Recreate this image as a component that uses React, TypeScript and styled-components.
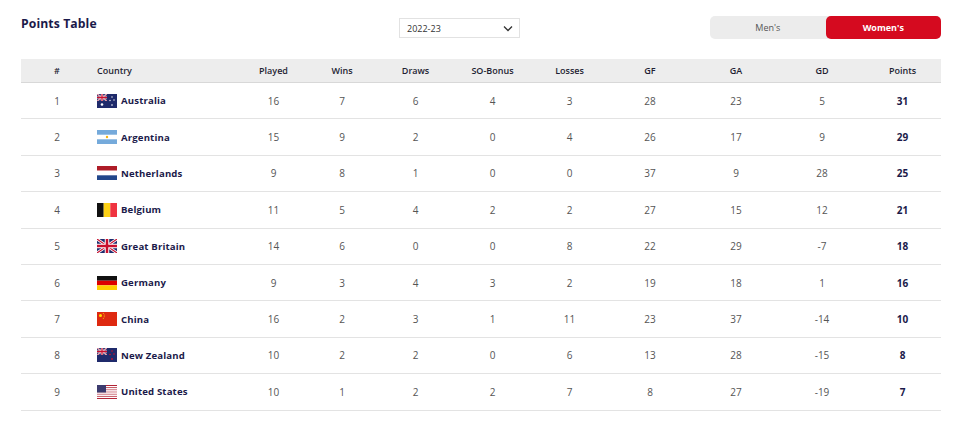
import * as React from 'react';
import styled, { createGlobalStyle } from 'styled-components';

const GlobalStyle = createGlobalStyle`
    html, body {
        margin: 0;
        padding: 0;
        background: #ffffff;
    }
    body {
        font-family: 'Open Sans', 'Liberation Sans', sans-serif;
        color: #1b1a4a;
    }
`;

const COLUMNS = '72px 147px 67px 70px 77px 77px 77px 84px 88px 84px 77px';

const Page = styled.div`
    width: 960px;
    padding: 12px 19px 0 21px;
    box-sizing: border-box;
`;

const TopBar = styled.div`
    display: grid;
    grid-template-columns: 378px 121px 1fr 231px;
    align-items: start;
    height: 47px;
`;

const Title = styled.h1`
    margin: 3px 0 0;
    font-size: 12.2px;
    font-weight: 700;
    color: #1b1a4a;
    letter-spacing: 0.1px;
`;

const SeasonSelect = styled.div`
    margin-top: 6px;
    height: 20px;
    border: 1px solid #e2e2e2;
    box-sizing: border-box;
    display: flex;
    align-items: center;
    justify-content: space-between;
    padding: 0 6px 0 7px;
    font-size: 9px;
    color: #333;
`;

const Toggle = styled.div`
    margin-top: 4px;
    display: grid;
    grid-template-columns: 1fr 1fr;
    height: 23px;
    background: #ececec;
    border-radius: 5px;
`;

const ToggleButton = styled.div<{ $active?: boolean }>`
    display: flex;
    align-items: center;
    justify-content: center;
    border-radius: 5px;
    font-size: 9px;
    font-weight: ${({ $active }) => ($active ? 700 : 400)};
    color: ${({ $active }) => ($active ? '#ffffff' : '#555')};
    background: ${({ $active }) => ($active ? '#d50a1f' : 'transparent')};
`;

const Table = styled.div`
    width: 920px;
`;

const HeaderRow = styled.div`
    display: grid;
    grid-template-columns: ${COLUMNS};
    height: 23px;
    background: #ededed;
    border-bottom: 1px solid #d8d8d8;
    align-items: center;
`;

const HeaderCell = styled.div<{ $left?: boolean }>`
    font-size: 9px;
    font-weight: 600;
    color: #1f1f33;
    text-align: ${({ $left }) => ($left ? 'left' : 'center')};
    padding-left: ${({ $left }) => ($left ? '4px' : '0')};
`;

const Row = styled.div`
    display: grid;
    grid-template-columns: ${COLUMNS};
    height: 35.4px;
    border-bottom: 1px solid #e3e3e3;
    align-items: center;
    box-sizing: content-box;
`;

const Cell = styled.div<{ $bold?: boolean }>`
    font-size: 10px;
    text-align: center;
    color: ${({ $bold }) => ($bold ? '#1b1a4a' : '#555')};
    font-weight: ${({ $bold }) => ($bold ? 700 : 400)};
`;

const CountryCell = styled.div`
    display: flex;
    align-items: center;
    gap: 4px;
    padding-left: 4px;
    font-size: 9.6px;
    font-weight: 700;
    letter-spacing: 0.15px;
    color: #1b1a4a;
`;

const FlagBox = styled.svg`
    width: 20px;
    height: 14px;
    flex: none;
    display: block;
`;

const Chevron = () => (
    <svg width="10" height="7" viewBox="0 0 10 7">
        <path d="M1 1.5 L5 5.5 L9 1.5" fill="none" stroke="#333" strokeWidth="1.3" />
    </svg>
);

const UnionJack = ({ w = 20, h = 14 }: { w?: number; h?: number }) => (
    <g>
        <rect width={w} height={h} fill="#1f2d6e" />
        <path d={`M0 0 L${w} ${h} M${w} 0 L0 ${h}`} stroke="#fff" strokeWidth={h * 0.2} />
        <path d={`M0 0 L${w} ${h} M${w} 0 L0 ${h}`} stroke="#c8102e" strokeWidth={h * 0.08} />
        <path d={`M${w / 2} 0 V${h} M0 ${h / 2} H${w}`} stroke="#fff" strokeWidth={h * 0.32} />
        <path d={`M${w / 2} 0 V${h} M0 ${h / 2} H${w}`} stroke="#c8102e" strokeWidth={h * 0.18} />
    </g>
);

const Flag = ({ code }: { code: string }) => {
    switch (code) {
        case 'AUS':
        case 'NZL':
            return (
                <FlagBox viewBox="0 0 20 14">
                    <rect width="20" height="14" fill="#1f2a6b" />
                    <svg x="0" y="0" width="10" height="7" viewBox="0 0 20 14">
                        <UnionJack />
                    </svg>
                    {code === 'AUS' ? (
                        <>
                            <circle cx="5" cy="10.5" r="1.3" fill="#fff" />
                            <circle cx="15" cy="3" r="0.7" fill="#fff" />
                            <circle cx="13" cy="6.5" r="0.7" fill="#fff" />
                            <circle cx="17" cy="6" r="0.7" fill="#fff" />
                            <circle cx="15" cy="11" r="0.8" fill="#fff" />
                        </>
                    ) : (
                        <>
                            <circle cx="15" cy="3" r="0.8" fill="#d0102a" />
                            <circle cx="13" cy="6.5" r="0.8" fill="#d0102a" />
                            <circle cx="17" cy="6" r="0.8" fill="#d0102a" />
                            <circle cx="15" cy="11" r="0.9" fill="#d0102a" />
                        </>
                    )}
                </FlagBox>
            );
        case 'ARG':
            return (
                <FlagBox viewBox="0 0 20 14">
                    <rect width="20" height="14" fill="#fff" />
                    <rect width="20" height="4.7" fill="#75aadb" />
                    <rect y="9.3" width="20" height="4.7" fill="#75aadb" />
                    <circle cx="10" cy="7" r="1.2" fill="#f6b40e" />
                </FlagBox>
            );
        case 'NED':
            return (
                <FlagBox viewBox="0 0 20 14">
                    <rect width="20" height="4.7" fill="#ae1c28" />
                    <rect y="4.7" width="20" height="4.6" fill="#fff" />
                    <rect y="9.3" width="20" height="4.7" fill="#21468b" />
                </FlagBox>
            );
        case 'BEL':
            return (
                <FlagBox viewBox="0 0 20 14">
                    <rect width="6.7" height="14" fill="#111" />
                    <rect x="6.7" width="6.6" height="14" fill="#fcd116" />
                    <rect x="13.3" width="6.7" height="14" fill="#ef3340" />
                </FlagBox>
            );
        case 'GBR':
            return (
                <FlagBox viewBox="0 0 20 14">
                    <UnionJack />
                </FlagBox>
            );
        case 'GER':
            return (
                <FlagBox viewBox="0 0 20 14">
                    <rect width="20" height="4.7" fill="#111" />
                    <rect y="4.7" width="20" height="4.6" fill="#dd0000" />
                    <rect y="9.3" width="20" height="4.7" fill="#ffce00" />
                </FlagBox>
            );
        case 'CHN':
            return (
                <FlagBox viewBox="0 0 20 14">
                    <rect width="20" height="14" fill="#de2910" />
                    <circle cx="3.5" cy="3.5" r="1.5" fill="#ffde00" />
                    <circle cx="6.3" cy="1.5" r="0.5" fill="#ffde00" />
                    <circle cx="7.2" cy="3" r="0.5" fill="#ffde00" />
                    <circle cx="7.2" cy="4.8" r="0.5" fill="#ffde00" />
                    <circle cx="6.3" cy="6.2" r="0.5" fill="#ffde00" />
                </FlagBox>
            );
        case 'USA':
            return (
                <FlagBox viewBox="0 0 20 14">
                    {Array.from({ length: 7 }).map((_, i) => (
                        <rect key={i} y={i * 2.15} width="20" height="1.08" fill="#b22234" />
                    ))}
                    {Array.from({ length: 6 }).map((_, i) => (
                        <rect key={'w' + i} y={i * 2.15 + 1.08} width="20" height="1.07" fill="#fff" />
                    ))}
                    <rect width="9" height="7.5" fill="#3c3b6e" />
                </FlagBox>
            );
        default:
            return null;
    }
};

interface Team {
    code: string;
    name: string;
    stats: number[];
    points: number;
}

const teams: Team[] = [
    { code: 'AUS', name: 'Australia', stats: [16, 7, 6, 4, 3, 28, 23, 5], points: 31 },
    { code: 'ARG', name: 'Argentina', stats: [15, 9, 2, 0, 4, 26, 17, 9], points: 29 },
    { code: 'NED', name: 'Netherlands', stats: [9, 8, 1, 0, 0, 37, 9, 28], points: 25 },
    { code: 'BEL', name: 'Belgium', stats: [11, 5, 4, 2, 2, 27, 15, 12], points: 21 },
    { code: 'GBR', name: 'Great Britain', stats: [14, 6, 0, 0, 8, 22, 29, -7], points: 18 },
    { code: 'GER', name: 'Germany', stats: [9, 3, 4, 3, 2, 19, 18, 1], points: 16 },
    { code: 'CHN', name: 'China', stats: [16, 2, 3, 1, 11, 23, 37, -14], points: 10 },
    { code: 'NZL', name: 'New Zealand', stats: [10, 2, 2, 0, 6, 13, 28, -15], points: 8 },
    { code: 'USA', name: 'United States', stats: [10, 1, 2, 2, 7, 8, 27, -19], points: 7 },
];

const headings = ['Played', 'Wins', 'Draws', 'SO-Bonus', 'Losses', 'GF', 'GA', 'GD', 'Points'];

export const App: React.FunctionComponent = () => {
    return (
        <Page>
            <GlobalStyle />
            <TopBar>
                <Title>Points Table</Title>
                <SeasonSelect>
                    <span>2022-23</span>
                    <Chevron />
                </SeasonSelect>
                <div />
                <Toggle>
                    <ToggleButton>Men's</ToggleButton>
                    <ToggleButton $active>Women's</ToggleButton>
                </Toggle>
            </TopBar>
            <Table>
                <HeaderRow>
                    <HeaderCell>#</HeaderCell>
                    <HeaderCell $left>Country</HeaderCell>
                    {headings.map((h) => (
                        <HeaderCell key={h}>{h}</HeaderCell>
                    ))}
                </HeaderRow>
                {teams.map((team, i) => (
                    <Row key={team.code}>
                        <Cell>{i + 1}</Cell>
                        <CountryCell>
                            <Flag code={team.code} />
                            {team.name}
                        </CountryCell>
                        {team.stats.map((s, j) => (
                            <Cell key={j}>{s}</Cell>
                        ))}
                        <Cell $bold>{team.points}</Cell>
                    </Row>
                ))}
            </Table>
        </Page>
    );
};

export default App;
